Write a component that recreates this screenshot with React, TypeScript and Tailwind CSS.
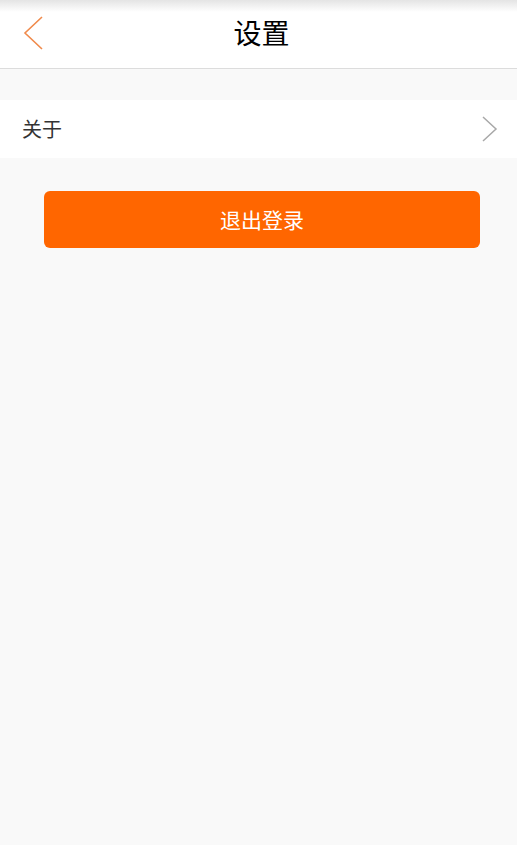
export default function App() {
  return (
    <div
      className="min-h-[845px] bg-[#f9f9f9]"
      style={{ fontFamily: '"Noto Sans CJK SC", "Noto Sans", sans-serif' }}
    >
      <header className="relative flex h-[69px] items-center justify-center border-b border-[#dcdcdc] bg-white">
        <div className="absolute inset-x-0 top-0 h-[12px] bg-gradient-to-b from-[#e4e4e4] to-white" />
        <button type="button" className="absolute left-[22px] top-[15px]">
          <svg width="24" height="36" viewBox="0 0 24 36" fill="none">
            <path d="M20 2 L3 18 L20 34" stroke="#f08a4b" strokeWidth="1.6" />
          </svg>
        </button>
        <h1 className="relative ml-[6px] mt-[-5px] text-[28px] font-normal leading-none text-black">设置</h1>
      </header>

      <div className="mt-[31px] flex h-[58px] items-center justify-between bg-white pl-[22px] pr-[19px]">
        <span className="text-[20px] text-[#333]">关于</span>
        <svg width="17" height="26" viewBox="0 0 17 26" fill="none">
          <path d="M2 1 L15 13 L2 25" stroke="#a8a8a8" strokeWidth="1.5" />
        </svg>
      </div>

      <div className="mt-[33px] px-[44px]">
        <button
          type="button"
          className="flex h-[57px] w-[436px] items-center justify-center rounded-[6px] bg-[#ff6600] text-[21px] text-white"
        >
          退出登录
        </button>
      </div>
    </div>
  );
}
